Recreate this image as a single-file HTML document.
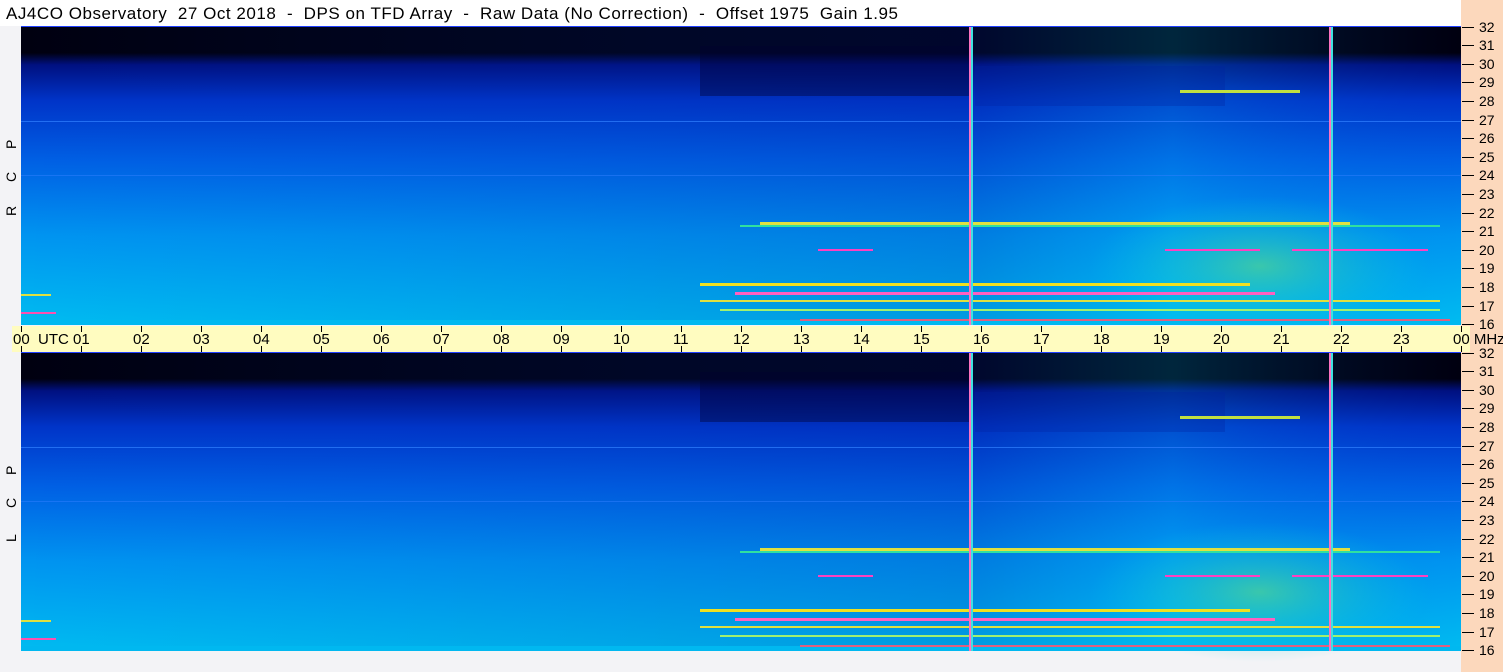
<!DOCTYPE html>
<html><head><meta charset="utf-8"><style>
html,body{margin:0;padding:0;width:1503px;height:672px;overflow:hidden;background:#f3f3f6;font-family:"Liberation Sans","DejaVu Sans",sans-serif}
text{white-space:pre}
</style></head><body>
<svg width="1503" height="672" xmlns="http://www.w3.org/2000/svg" style="position:absolute;left:0;top:0" xml:space="preserve">
<defs>
<linearGradient id="v" x1="0" y1="0" x2="0" y2="1">
<stop offset="0" stop-color="#000010"/>
<stop offset="0.09" stop-color="#000010"/>
<stop offset="0.13" stop-color="#001080"/>
<stop offset="0.25" stop-color="#0034c8"/>
<stop offset="0.45" stop-color="#0060e4"/>
<stop offset="0.7" stop-color="#0094f0"/>
<stop offset="1" stop-color="#00bcf0"/>
</linearGradient>
<linearGradient id="h" x1="0" y1="0" x2="1" y2="0">
<stop offset="0" stop-color="#0040d0" stop-opacity="0"/>
<stop offset="0.45" stop-color="#0030b0" stop-opacity="0.15"/>
<stop offset="0.66" stop-color="#0020a0" stop-opacity="0.2"/>
<stop offset="0.8" stop-color="#00c0f0" stop-opacity="0.2"/>
<stop offset="1" stop-color="#0040d0" stop-opacity="0"/>
</linearGradient>
<radialGradient id="g" cx="0.5" cy="0.5" r="0.5">
<stop offset="0" stop-color="#60e080" stop-opacity="0.6"/>
<stop offset="1" stop-color="#00d0e0" stop-opacity="0"/>
</radialGradient>
<g id="p">
<rect x="21" y="0" width="1440" height="299" fill="url(#v)"/>
<rect x="21" y="0" width="1440" height="299" fill="url(#h)"/>
<rect x="700" y="20" width="270" height="50" fill="#000030" opacity="0.4"/>
<rect x="975" y="40" width="250" height="40" fill="#0020a0" opacity="0.3"/>
<ellipse cx="1260" cy="240" rx="170" ry="70" fill="url(#g)"/>
<rect x="21" y="95" width="1440" height="1" fill="#3080ff" opacity="0.7"/>
<rect x="21" y="149" width="1440" height="1" fill="#3080ff" opacity="0.5"/>
<rect x="760" y="196" width="590" height="3" fill="#e0e040"/>
<rect x="740" y="199" width="700" height="2" fill="#30e0a0"/>
<rect x="818" y="223" width="55" height="2" fill="#ff40c0"/>
<rect x="1165" y="223" width="95" height="2" fill="#ff40c0"/>
<rect x="1292" y="223" width="136" height="2" fill="#ff40c0"/>
<rect x="1180" y="64" width="120" height="3" fill="#c0e040"/>
<rect x="700" y="257" width="550" height="3" fill="#f0e020"/>
<rect x="735" y="266" width="540" height="3" fill="#ff60c0"/>
<rect x="700" y="274" width="740" height="2" fill="#e0e040"/>
<rect x="720" y="283" width="720" height="2" fill="#a0f070"/>
<rect x="21" y="268" width="30" height="2" fill="#e0e040"/>
<rect x="21" y="286" width="35" height="2" fill="#ff50b0"/>
<rect x="21" y="294" width="1440" height="5" fill="#00b8f0"/>
<rect x="800" y="293" width="650" height="2" fill="#e06080"/>
<rect x="969" y="0" width="2" height="299" fill="#ff70c0"/>
<rect x="971" y="0" width="2" height="299" fill="#40e0e0"/>
<rect x="1329" y="0" width="2" height="299" fill="#ff70c0"/>
<rect x="1331" y="0" width="2" height="299" fill="#40e0e0"/>
<rect x="21" y="0" width="1440" height="1" fill="#2040ff"/>
</g>
</defs>
<rect x="0" y="0" width="1503" height="26" fill="#fff"/>
<text x="6" y="19" font-size="17" fill="#000" textLength="892">AJ4CO Observatory  27 Oct 2018  -  DPS on TFD Array  -  Raw Data (No Correction)  -  Offset 1975  Gain 1.95</text>
<rect x="1461" y="0" width="42" height="672" fill="#fcd8bc"/>
<use href="#p" y="26"/>
<use href="#p" y="352"/>
<rect x="12" y="326" width="1458" height="26" fill="#fffcc0"/>
<g font-size="15" fill="#000">
<text x="13" y="344">00  UTC</text>
<text x="73" y="344">01</text><text x="133" y="344">02</text><text x="193" y="344">03</text><text x="253" y="344">04</text><text x="313" y="344">05</text><text x="373" y="344">06</text><text x="433" y="344">07</text><text x="493" y="344">08</text><text x="553" y="344">09</text><text x="613" y="344">10</text><text x="673" y="344">11</text><text x="733" y="344">12</text><text x="793" y="344">13</text><text x="853" y="344">14</text><text x="913" y="344">15</text><text x="973" y="344">16</text><text x="1033" y="344">17</text><text x="1093" y="344">18</text><text x="1153" y="344">19</text><text x="1213" y="344">20</text><text x="1273" y="344">21</text><text x="1333" y="344">22</text><text x="1393" y="344">23</text><text x="1453" y="344">00 MHz</text>
</g>
<g stroke="#000" stroke-width="1">
<path d="M21.5 326v6M81.5 326v6M141.5 326v6M201.5 326v6M261.5 326v6M321.5 326v6M381.5 326v6M441.5 326v6M501.5 326v6M561.5 326v6M621.5 326v6M681.5 326v6M741.5 326v6M801.5 326v6M861.5 326v6M921.5 326v6M981.5 326v6M1041.5 326v6M1101.5 326v6M1161.5 326v6M1221.5 326v6M1281.5 326v6M1341.5 326v6M1401.5 326v6M1461.5 326v6"/>
<path d="M21.5 346v6M81.5 346v6M141.5 346v6M201.5 346v6M261.5 346v6M321.5 346v6M381.5 346v6M441.5 346v6M501.5 346v6M561.5 346v6M621.5 346v6M681.5 346v6M741.5 346v6M801.5 346v6M861.5 346v6M921.5 346v6M981.5 346v6M1041.5 346v6M1101.5 346v6M1161.5 346v6M1221.5 346v6M1281.5 346v6M1341.5 346v6M1401.5 346v6M1461.5 346v6"/>
</g>
<g font-size="14" fill="#000" stroke="#000">
<g id="ax">
<path d="M1462 27.5h12M1462 45.5h12M1462 64.5h12M1462 82.5h12M1462 101.5h12M1462 120.5h12M1462 138.5h12M1462 157.5h12M1462 175.5h12M1462 194.5h12M1462 213.5h12M1462 231.5h12M1462 250.5h12M1462 268.5h12M1462 287.5h12M1462 306.5h12M1462 324.5h12"/>
<g stroke="none">
<text x="1479" y="32">32</text><text x="1479" y="50">31</text><text x="1479" y="69">30</text><text x="1479" y="87">29</text><text x="1479" y="106">28</text><text x="1479" y="125">27</text><text x="1479" y="143">26</text><text x="1479" y="162">25</text><text x="1479" y="180">24</text><text x="1479" y="199">23</text><text x="1479" y="218">22</text><text x="1479" y="236">21</text><text x="1479" y="255">20</text><text x="1479" y="273">19</text><text x="1479" y="292">18</text><text x="1479" y="311">17</text><text x="1479" y="329">16</text>
</g>
</g>
<use href="#ax" y="326"/>
</g>
<g font-size="14" fill="#000">
<text transform="translate(16,149) rotate(-90)">P</text>
<text transform="translate(16,182) rotate(-90)">C</text>
<text transform="translate(16,216) rotate(-90)">R</text>
<text transform="translate(16,475) rotate(-90)">P</text>
<text transform="translate(16,508) rotate(-90)">C</text>
<text transform="translate(16,542) rotate(-90)">L</text>
</g>
</svg>
</body></html>
